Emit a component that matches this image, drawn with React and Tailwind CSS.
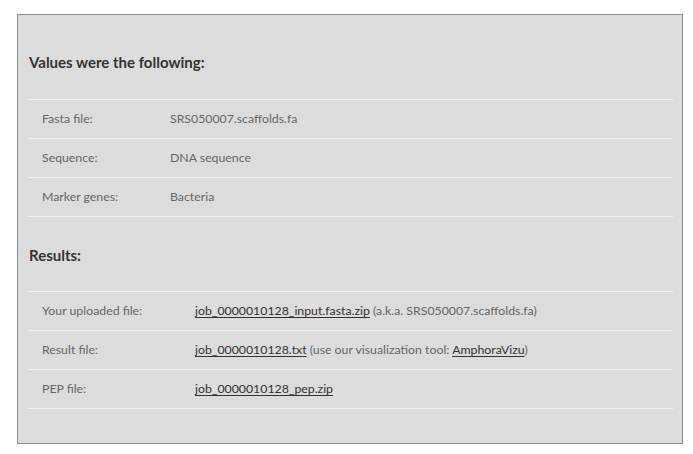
import React from 'react';

const values = [
    { label: 'Fasta file:', value: 'SRS050007.scaffolds.fa' },
    { label: 'Sequence:', value: 'DNA sequence' },
    { label: 'Marker genes:', value: 'Bacteria' },
];

const Row = ({ label, labelWidth, last, children }) => (
    <div className={`flex items-center h-[39px] border-t border-[#efefef] ${last ? 'border-b h-[40px]' : ''}`}>
        <div className={`${labelWidth} shrink-0 pl-[14px] text-[#666]`}>{label}</div>
        <div className="text-[#666]">{children}</div>
    </div>
);

const Link = ({ children }) => (
    <a href="#" className="text-[#333] underline underline-offset-2">{children}</a>
);

export default function App() {
    return (
        <div className="bg-white min-h-[454px] pt-[14px] pl-[17px]" style={{ fontFamily: 'Lato, "Open Sans", sans-serif' }}>
            <div className="w-[666px] h-[430px] border border-[#8c8c8c] bg-[#dcdcdc] pt-[37px] pl-[10px] pr-[9px] text-[12.3px] leading-[20px]">
                <h2 className="pl-[1px] text-[15px] font-bold text-[#333] leading-[20px]">Values were the following:</h2>

                <div className="mt-[27px]">
                    {values.map((v, i) => (
                        <Row key={v.label} label={v.label} labelWidth="w-[142px]" last={i === values.length - 1}>
                            {v.value}
                        </Row>
                    ))}
                </div>

                <h2 className="mt-[28px] pl-[1px] text-[15px] font-bold text-[#333] leading-[20px]">Results:</h2>

                <div className="mt-[26px]">
                    <Row label="Your uploaded file:" labelWidth="w-[167px]">
                        <Link>job_0000010128_input.fasta.zip</Link> (a.k.a. SRS050007.scaffolds.fa)
                    </Row>
                    <Row label="Result file:" labelWidth="w-[167px]">
                        <Link>job_0000010128.txt</Link> (use our visualization tool: <Link>AmphoraVizu</Link>)
                    </Row>
                    <Row label="PEP file:" labelWidth="w-[167px]" last>
                        <Link>job_0000010128_pep.zip</Link>
                    </Row>
                </div>
            </div>
        </div>
    );
}
